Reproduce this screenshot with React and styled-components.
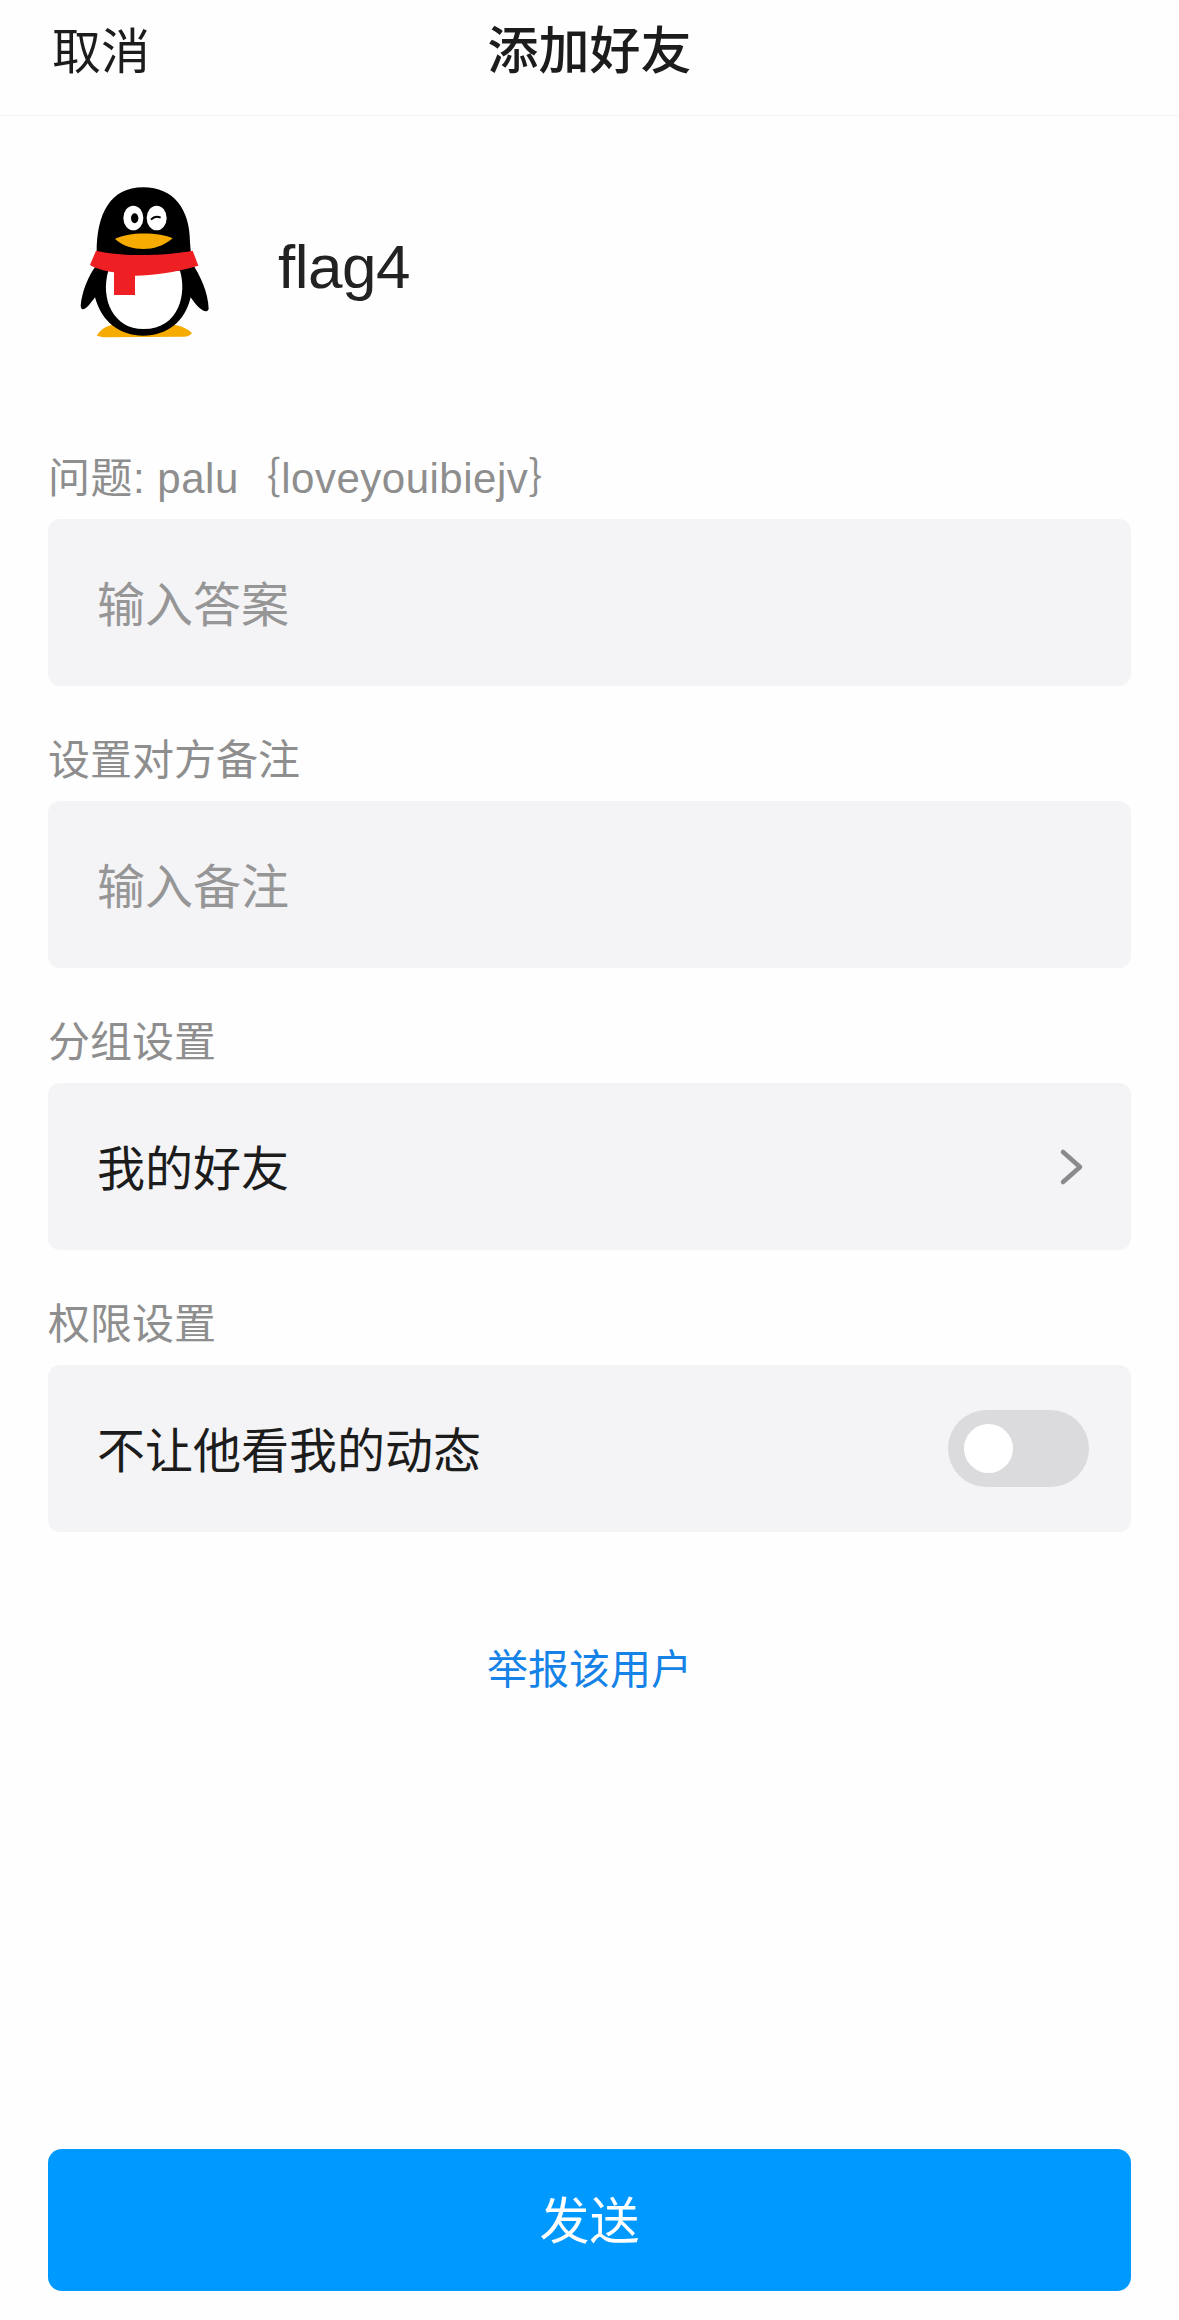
import React from "react";
import styled, { createGlobalStyle } from "styled-components";

const GlobalStyle = createGlobalStyle`
  html, body {
    margin: 0;
    padding: 0;
    background: #fefefe;
  }
  body {
    font-family: "Liberation Sans", "Noto Sans CJK SC", sans-serif;
  }
`;

const Page = styled.div`
  width: 1179px;
  height: 2320px;
  display: flex;
  flex-direction: column;
  box-sizing: border-box;
  padding-bottom: 29px;
  overflow: hidden;
`;

const Header = styled.header`
  height: 116px;
  flex: none;
  display: grid;
  grid-template-columns: 1fr auto 1fr;
  align-items: center;
  padding: 0 52px 12px;
  box-sizing: border-box;
  border-bottom: 1px solid #f2f2f2;
  color: #1c1c1c;
`;

const Cancel = styled.div`
  font-size: 49px;
  line-height: 68px;
`;

const Title = styled.h1`
  margin: 0;
  font-size: 51px;
  line-height: 68px;
  font-weight: 500;
`;

const Profile = styled.section`
  display: flex;
  align-items: center;
  gap: 38px;
  padding: 43px 0 0 40px;
  flex: none;
`;

const Name = styled.div`
  font-size: 62px;
  line-height: 70px;
  color: #222;
  letter-spacing: -0.5px;
  margin-top: 16px;
`;

const Form = styled.div`
  display: flex;
  flex-direction: column;
  gap: 46px;
  padding: 91px 48px 0;
`;

const Field = styled.div`
  display: flex;
  flex-direction: column;
  gap: 15px;
`;

const Label = styled.div`
  padding-top: 4px;
  font-size: 42px;
  line-height: 50px;
  color: #8e8e8e;
  white-space: nowrap;
  letter-spacing: ${(p) => (p.$latin ? "0.5px" : "0")};
`;

const Row = styled.div`
  height: 167px;
  box-sizing: border-box;
  background: #f4f4f6;
  border-radius: 12px;
  padding: 0 42px 4px 49px;
  display: flex;
  align-items: center;
  justify-content: space-between;
  font-size: 48px;
  color: ${(p) => (p.$muted ? "#969696" : "#1c1c1c")};
`;

const Switch = styled.div`
  position: relative;
  width: 141px;
  height: 77px;
  margin-top: 4px;
  border-radius: 39px;
  background: #dbdbdd;
`;

const Knob = styled.span`
  position: absolute;
  left: 16px;
  top: 14px;
  width: 49px;
  height: 49px;
  border-radius: 50%;
  background: #fff;
`;

const Chevron = styled.svg`
  width: 28px;
  height: 40px;
  display: block;
  margin: 4px 3px 0 0;
`;

const Report = styled.a`
  display: block;
  margin-top: 113px;
  text-align: center;
  font-size: 41px;
  line-height: 50px;
  color: #1482e6;
`;

const SendButton = styled.button`
  margin: auto 48px 0;
  height: 142px;
  flex: none;
  border: 0;
  border-radius: 14px;
  padding: 0 0 6px;
  background: #0099ff;
  color: #fff;
  font-family: inherit;
  font-size: 50px;
`;

const Penguin = () => (
  <svg width="200" height="200" viewBox="0 0 600 600">
    <path
      d="M170 530 Q185 505 215 498 L405 498 Q440 505 456 522 Q450 533 430 533 L190 535 Z"
      fill="#f5ab00"
    />
    <path
      d="M310 85 C210 85 170 165 170 280 L168 320 C145 350 125 400 122 440 C125 462 140 450 165 415 C185 490 240 530 310 530 C380 530 435 490 452 415 C475 450 500 468 506 450 C505 400 480 350 455 310 L450 250 C450 150 400 85 310 85 Z"
      fill="#000"
    />
    <path
      d="M205 335 L420 335 C440 400 420 510 310 510 C220 510 180 420 205 335 Z"
      fill="#fff"
    />
    <path
      d="M168 275 C250 295 380 290 458 275 L475 320 C400 342 340 348 285 350 L285 408 L222 408 L222 340 C190 335 165 328 150 318 Z"
      fill="#ee2024"
    />
    <path
      d="M225 240 C260 218 360 218 398 238 C370 262 340 270 310 270 C280 270 250 262 225 240 Z"
      fill="#f5ab00"
    />
    <ellipse cx="280" cy="177" rx="30" ry="37" fill="#fff" />
    <ellipse cx="284" cy="178" rx="11" ry="15" fill="#000" />
    <ellipse cx="350" cy="177" rx="30" ry="37" fill="#fff" />
    <path d="M333 182 Q345 168 362 176" stroke="#000" strokeWidth="6" fill="none" />
  </svg>
);

const App = () => (
  <Page>
    <GlobalStyle />
    <Header>
      <Cancel>取消</Cancel>
      <Title>添加好友</Title>
    </Header>
    <Profile>
      <Penguin />
      <Name>flag4</Name>
    </Profile>
    <Form>
      <Field>
        <Label $latin>问题: palu｛loveyouibiejv｝</Label>
        <Row $muted>输入答案</Row>
      </Field>
      <Field>
        <Label>设置对方备注</Label>
        <Row $muted>输入备注</Row>
      </Field>
      <Field>
        <Label>分组设置</Label>
        <Row>
          我的好友
          <Chevron viewBox="0 0 28 40">
            <path d="M5 5 L22 20 L5 35" fill="none" stroke="#8a8a8c" strokeWidth="4.5" strokeLinecap="round" strokeLinejoin="round" />
          </Chevron>
        </Row>
      </Field>
      <Field>
        <Label>权限设置</Label>
        <Row>
          不让他看我的动态
          <Switch>
            <Knob />
          </Switch>
        </Row>
      </Field>
    </Form>
    <Report>举报该用户</Report>
    <SendButton>发送</SendButton>
  </Page>
);

export default App;
